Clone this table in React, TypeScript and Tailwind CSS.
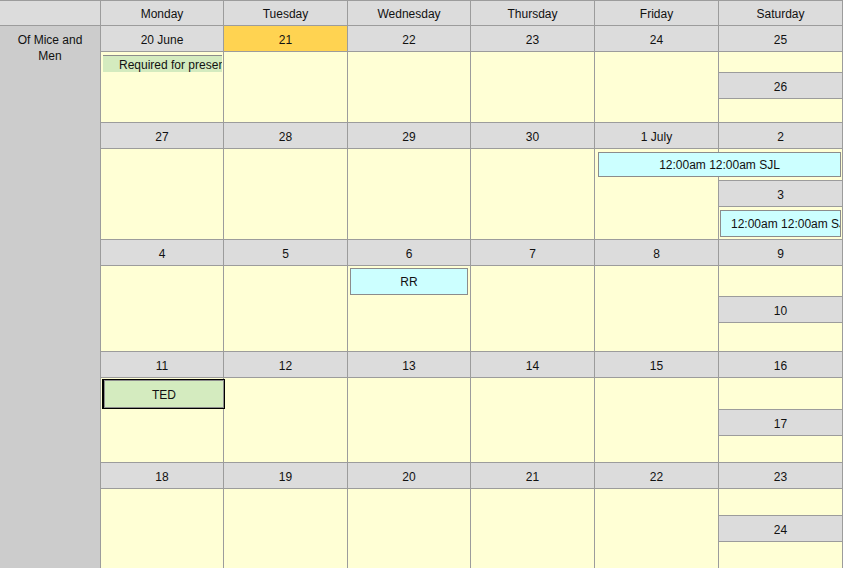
import React from "react";

type Week = {
  dates: string[];
  sunday: string;
  rows: string;
  today?: number;
};

const dayNames = ["Monday", "Tuesday", "Wednesday", "Thursday", "Friday", "Saturday"];

const weeks: Week[] = [
  { dates: ["20 June", "21", "22", "23", "24", "25"], sunday: "26", rows: "grid-rows-[25px_20px_25px_23px]", today: 1 },
  { dates: ["27", "28", "29", "30", "1 July", "2"], sunday: "3", rows: "grid-rows-[25px_31px_25px_32px]" },
  { dates: ["4", "5", "6", "7", "8", "9"], sunday: "10", rows: "grid-rows-[25px_30px_25px_28px]" },
  { dates: ["11", "12", "13", "14", "15", "16"], sunday: "17", rows: "grid-rows-[25px_31px_25px_26px]" },
  { dates: ["18", "19", "20", "21", "22", "23"], sunday: "24", rows: "grid-rows-[25px_26px_25px_40px]" },
];

const weekdayCols = ["col-start-1", "col-start-2", "col-start-3", "col-start-4", "col-start-5"];

// events per week, placed on the week's grid
function weekEvents(index: number) {
  switch (index) {
    case 0:
      return (
        <div className="col-start-1 row-start-2 z-10 ml-[2px] mr-px mt-[3px] h-[17px] overflow-hidden whitespace-nowrap border-t border-[#8c8c8c] bg-[#d4ebbf] pl-[16px] pt-px leading-[16px]">
          Required for presentation
        </div>
      );
    case 1:
      return (
        <>
          <div className="col-start-5 col-span-2 row-start-2 z-10 ml-[3px] mr-px mt-[3px] flex h-[25px] items-center justify-center overflow-hidden whitespace-nowrap border border-[#8c8c8c] bg-[#ccffff] pt-px">
            12:00am 12:00am SJL
          </div>
          <div className="col-start-6 row-start-4 z-10 ml-px mr-px mt-[3px] flex h-[27px] items-center overflow-hidden whitespace-nowrap border border-[#8c8c8c] bg-[#ccffff] pl-[10px] pt-px">
            12:00am 12:00am SJL
          </div>
        </>
      );
    case 2:
      return (
        <div className="col-start-3 row-start-2 z-10 mx-[2px] mt-[2px] flex h-[27px] items-center justify-center border border-[#8c8c8c] bg-[#ccffff] pt-px">
          RR
        </div>
      );
    case 3:
      return (
        <div className="col-start-1 row-start-2 z-10 ml-px mr-[-2px] mt-px h-[30px] border border-l-2 border-black">
          <div className="flex h-full items-center justify-center border border-[#8c8c8c] bg-[#d4ebbf] pt-px">TED</div>
        </div>
      );
    default:
      return null;
  }
}

function WeekRow({ week, index }: { week: Week; index: number }) {
  return (
    <div className={`grid grid-cols-[122px_123px_122px_123px_123px_123px] gap-px ${week.rows}`}>
      {week.dates.map((d, i) => (
        <div
          key={i}
          className={`row-start-1 flex items-center justify-center pt-[2px] ${weekdayCols[i] ?? "col-start-6"} ${
            week.today === i ? "bg-[#ffd351]" : "bg-[#dcdcdc]"
          }`}
        >
          {d}
        </div>
      ))}
      {weekdayCols.map((c) => (
        <div key={c} className={`${c} row-start-2 row-span-3 bg-[#ffffd5]`} />
      ))}
      <div className="col-start-6 row-start-2 bg-[#ffffd5]" />
      <div className="col-start-6 row-start-3 flex items-center justify-center bg-[#dcdcdc] pt-[2px]">{week.sunday}</div>
      <div className="col-start-6 row-start-4 bg-[#ffffd5]" />
      {weekEvents(index)}
    </div>
  );
}

export default function App() {
  return (
    <div className="h-[568px] w-[844px] overflow-hidden bg-white font-['Liberation_Sans',Arial,sans-serif] text-[12px] text-[#111]">
      <div className="flex w-[843px] flex-col gap-px bg-[#9c9c9c] pt-px pr-px">
        <div className="grid h-6 grid-cols-[100px_122px_123px_122px_123px_123px_123px] gap-px">
          <div className="bg-[#dcdcdc]" />
          {dayNames.map((d) => (
            <div key={d} className="flex items-center justify-center bg-[#dcdcdc] pt-[2px]">
              {d}
            </div>
          ))}
        </div>
        <div className="flex gap-px">
          <div className="w-[100px] shrink-0 bg-[#cccccc] px-3 pt-[6px] text-center leading-4">Of Mice and Men</div>
          <div className="flex flex-col gap-px">
            {weeks.map((w, i) => (
              <WeekRow key={i} week={w} index={i} />
            ))}
          </div>
        </div>
      </div>
    </div>
  );
}
